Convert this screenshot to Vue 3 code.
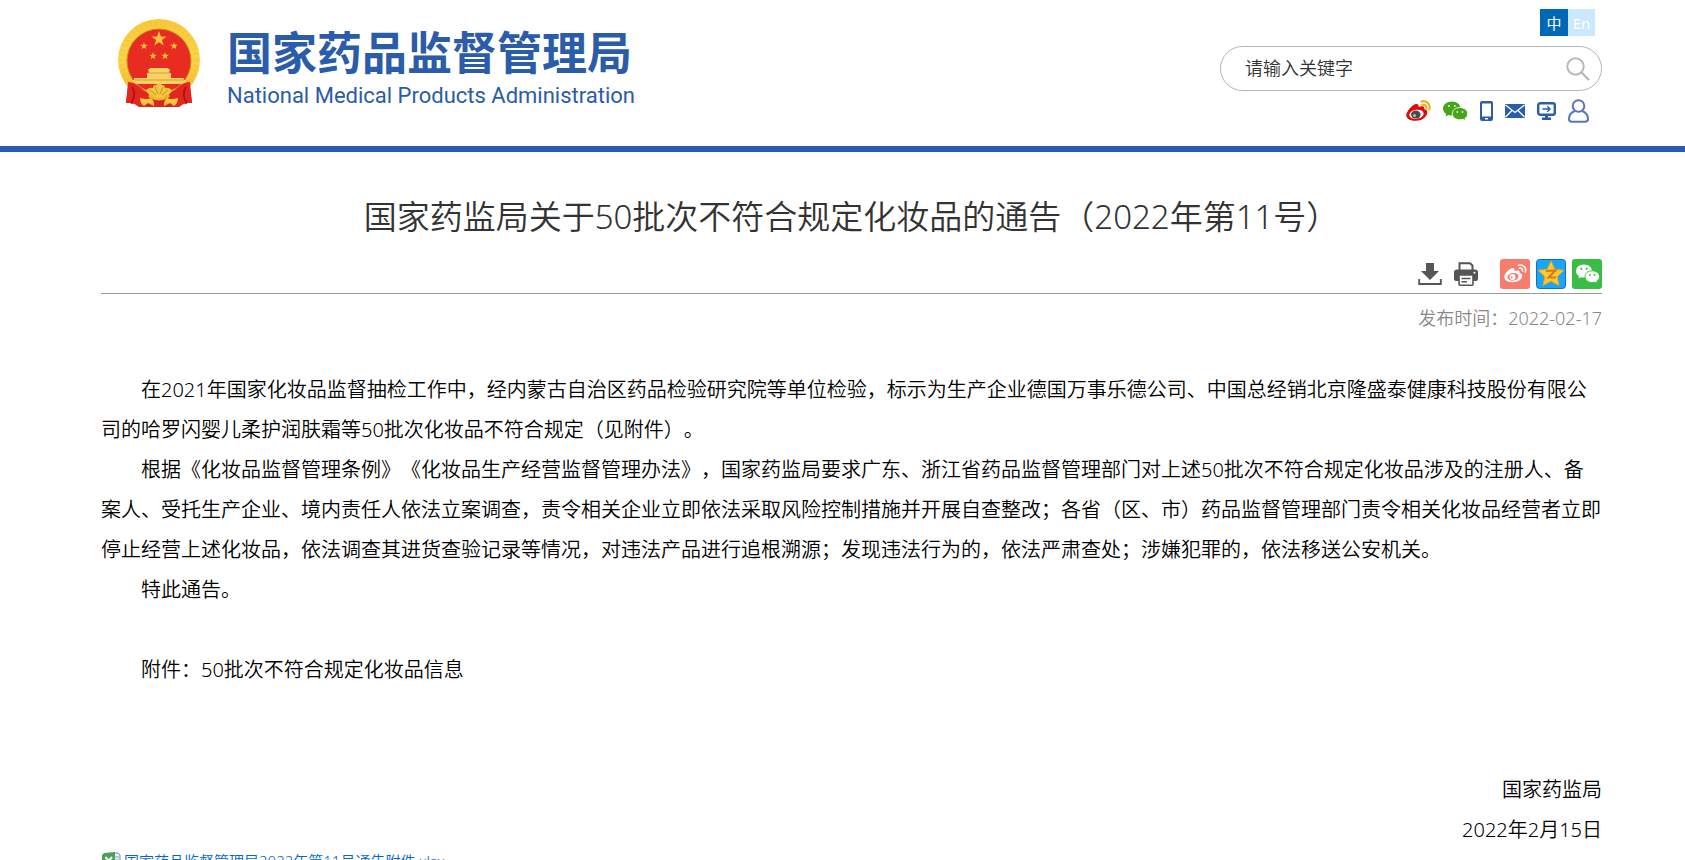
<script setup>
import { ref } from "vue";

const keyword = ref("");
const lang = ref("zh");

const paragraphs = [
  "在2021年国家化妆品监督抽检工作中，经内蒙古自治区药品检验研究院等单位检验，标示为生产企业德国万事乐德公司、中国总经销北京隆盛泰健康科技股份有限公司的哈罗闪婴儿柔护润肤霜等50批次化妆品不符合规定（见附件）。",
  "根据《化妆品监督管理条例》《化妆品生产经营监督管理办法》，国家药监局要求广东、浙江省药品监督管理部门对上述50批次不符合规定化妆品涉及的注册人、备案人、受托生产企业、境内责任人依法立案调查，责令相关企业立即依法采取风险控制措施并开展自查整改；各省（区、市）药品监督管理部门责令相关化妆品经营者立即停止经营上述化妆品，依法调查其进货查验记录等情况，对违法产品进行追根溯源；发现违法行为的，依法严肃查处；涉嫌犯罪的，依法移送公安机关。",
  "特此通告。",
];

// 五角星：国徽和 QQ 空间图标共用
function star(cx, cy, r, inner = 0.4) {
  const pts = [];
  for (let i = 0; i < 10; i++) {
    const a = (Math.PI / 5) * i - Math.PI / 2;
    const d = i % 2 ? r * inner : r;
    pts.push(`${(cx + d * Math.cos(a)).toFixed(1)},${(cy + d * Math.sin(a)).toFixed(1)}`);
  }
  return pts.join(" ");
}
</script>

<template>
  <div class="page" lang="zh-CN">
    <header class="header">
      <div class="wrap header-inner">
        <a class="brand" href="#">
          <svg class="emblem" viewBox="0 0 84 88" aria-hidden="true">
            <defs>
              <linearGradient id="gold" x1="0" y1="0" x2="0" y2="1">
                <stop offset="0" stop-color="#f8c93a" />
                <stop offset="0.5" stop-color="#fbd648" />
                <stop offset="1" stop-color="#eeb02a" />
              </linearGradient>
            </defs>
            <path d="M12 62 L9 84 Q12 83 15 85 Q19 83 25 88 L59 88 Q65 83 69 85 Q72 83 75 84 L72 62 Z" fill="#d9201c" />
            <circle cx="42" cy="41" r="41" fill="url(#gold)" />
            <circle cx="42" cy="41" r="37" fill="none" stroke="#e3a01c" stroke-width="5" stroke-dasharray="2 3" opacity="0.15" />
            <circle cx="42" cy="42" r="32" fill="#e82c22" stroke="#c98a1c" stroke-width="1" />
            <g fill="#f5c33c">
              <polygon :points="star(42, 20, 8)" />
              <polygon :points="star(27, 27, 4)" />
              <polygon :points="star(57, 27, 4)" />
              <polygon :points="star(36, 37, 4)" />
              <polygon :points="star(48, 37, 4)" />
            </g>
            <path d="M31 50 L33 50 L33 49 L51 49 L51 50 L53 50 L52 54 L54 54 L54 59 L67 59 L67 61 L69 61 L66 65 L18 65 L15 61 L17 61 L17 59 L30 59 L30 54 L32 54 Z" fill="#f7d266" />
            <path d="M31 54 H53 M17 61 H67" stroke="#dc9e2c" stroke-width="1" />
            <path d="M11 63 Q18 63 24 69 Q29 74 33 73 L30 81 L24 79 L28 88 L22 88 L16 84 L9 84 Z" fill="#e32720" />
            <path d="M73 63 Q66 63 60 69 Q55 74 51 73 L54 81 L60 79 L56 88 L62 88 L68 84 L75 84 Z" fill="#e32720" />
            <path d="M15 68 Q20 76 14 84 M69 68 Q64 76 70 84" stroke="#a81814" stroke-width="2" fill="none" />
            <path d="M30 77 Q42 86 54 77 L59 88 H25 Z" fill="#db241d" />
            <path d="M29 71 Q33 68 36 69 Q36 66 39 66 Q42 63 45 66 Q48 66 48 69 Q51 68 55 71 Q53 77 48 76 Q46 80 42 79 Q38 80 36 76 Q31 77 29 71 Z" fill="#f5c640" />
            <path d="M38 68 L41 75 M46 68 L43 75 M33 71 L39 76 M51 71 L45 76" stroke="#cf8d20" stroke-width="1" />
            <path d="M23 79 Q31 81 34 79 Q38 83 37 87 L31 84 L27 87 Q23 84 23 79 Z M61 79 Q53 81 50 79 Q46 83 47 87 L53 84 L57 87 Q61 84 61 79 Z" fill="#f5c640" />
          </svg>
          <span class="brand-text">
            <span class="brand-zh">国家药品监督管理局</span>
            <span class="brand-en">National Medical Products Administration</span>
          </span>
        </a>

        <div class="tools">
          <div class="langs">
            <button type="button" class="lang" :class="{ on: lang === 'zh' }" @click="lang = 'zh'">中</button>
            <button type="button" class="lang" :class="{ on: lang === 'en' }" @click="lang = 'en'">En</button>
          </div>
          <form class="search" @submit.prevent>
            <input v-model="keyword" type="text" placeholder="请输入关键字" aria-label="请输入关键字" />
            <button type="submit" aria-label="搜索">
              <svg width="24" height="24" viewBox="0 0 24 24" fill="none" stroke="#b9b9b9" stroke-width="2">
                <circle cx="9.5" cy="9.5" r="8.2" />
                <path d="M15.5 15.5 L23 23" stroke-width="2.4" />
              </svg>
            </button>
          </form>
          <nav class="links">
            <a href="#" aria-label="微博">
              <svg width="25" height="22" viewBox="0 0 25 22">
                <path d="M10 4 C12 3.5 13 5 12.5 7 C16 5.5 19 6 18 9 C22 10 22 13 20 16 C17 20.5 11 21.5 6 20.5 C1 19.5 -1 16 1 12.5 C3 8.5 7 4.5 10 4 Z" fill="#e20a0a" />
                <ellipse cx="10.5" cy="14.3" rx="7.2" ry="4.6" fill="#fff" transform="rotate(-8 10.5 14.3)" />
                <ellipse cx="9.8" cy="14.6" rx="4.8" ry="4" fill="#4a4a4a" />
                <circle cx="8.5" cy="15.5" r="1.5" fill="#bbb" />
                <path d="M15.5 1.5 C20 0 25 4 23.3 9.5 M16.3 4.8 C19 4.2 21 6 20.2 8.6" fill="none" stroke="#f0ae1c" stroke-width="2.2" stroke-linecap="round" />
              </svg>
            </a>
            <a href="#" aria-label="微信">
              <svg width="25" height="20" viewBox="0 0 25 20">
                <path d="M9 0.5 C4 0.5 0 3.5 0 7.5 C0 9.8 1.2 11.7 3.2 13 L2.5 15.5 L5.5 14 C6.7 14.4 7.9 14.5 9 14.5 C14 14.5 17.5 11.5 17.5 7.5 C17.5 3.5 14 0.5 9 0.5 Z" fill="#47a51b" />
                <path d="M16.8 6.5 C12.3 6.5 9.3 9.3 9.3 12.7 C9.3 16.3 12.5 18.8 17 18.8 C18 18.8 19 18.6 20 18.3 L22.6 19.7 L22 17.4 C23.8 16.2 24.7 14.6 24.7 12.7 C24.7 9.3 21.3 6.5 16.8 6.5 Z" fill="#47a51b" stroke="#fff" stroke-width="0.9" />
                <g fill="#e6f5df"><circle cx="6" cy="5" r="1" /><circle cx="11.8" cy="5" r="1" /><circle cx="14.3" cy="11" r="0.9" /><circle cx="19.5" cy="11" r="0.9" /></g>
              </svg>
            </a>
            <a href="#" aria-label="移动版">
              <svg width="13" height="20" viewBox="0 0 13 20">
                <path d="M2 0 H11 Q13 0 13 2 V18 Q13 20 11 20 H2 Q0 20 0 18 V2 Q0 0 2 0 Z M2 2.5 V15.5 H11 V2.5 Z M5 17 V18.5 H8 V17 Z" fill="#2b5dab" fill-rule="evenodd" />
              </svg>
            </a>
            <a href="#" aria-label="邮箱">
              <svg width="20" height="14" viewBox="0 0 20 14">
                <rect width="20" height="14" rx="1" fill="#2b5dab" />
                <path d="M0.5 1 L10 8.5 L19.5 1 M0.5 13 L7 6.5 M19.5 13 L13 6.5" fill="none" stroke="#fff" stroke-width="1.3" />
              </svg>
            </a>
            <a href="#" aria-label="电脑版">
              <svg width="19" height="18" viewBox="0 0 19 18">
                <rect x="1.2" y="1.2" width="16.6" height="11.6" rx="2" fill="none" stroke="#2b5dab" stroke-width="2.4" />
                <path d="M8 13 H11 V15.5 H14 V18 H5 V15.5 H8 Z" fill="#2b5dab" />
                <path d="M5.5 7 H13 M10.3 4.3 L13 7 L10.3 9.7" fill="none" stroke="#2b5dab" stroke-width="1.4" />
              </svg>
            </a>
            <a href="#" aria-label="个人中心">
              <svg width="21" height="24" viewBox="0 0 21 24" fill="none" stroke="#5b74b8" stroke-width="2">
                <circle cx="10.5" cy="7" r="5.8" />
                <path d="M6.8 12 C3 13.5 1 16.5 1 20 Q1 22.8 4 22.8 H17 Q20 22.8 20 20 C20 16.5 18 13.5 14.2 12" />
              </svg>
            </a>
          </nav>
        </div>
      </div>
    </header>

    <main class="wrap article">
      <h1>国家药监局关于50批次不符合规定化妆品的通告（2022年第11号）</h1>

      <div class="share">
        <button type="button" aria-label="下载">
          <svg width="24" height="24" viewBox="0 0 24 24" fill="#555">
            <path d="M8 1 H16 V9 H21 L12 18 L3 9 H8 Z" />
            <path d="M1.2 17 V22 H22.8 V17" fill="none" stroke="#555" stroke-width="1.8" />
          </svg>
        </button>
        <button type="button" aria-label="打印" class="print">
          <svg width="24" height="24" viewBox="0 0 24 24">
            <path d="M5.5 8 V1.2 H16 L18.5 3.5 V8" fill="#fff" stroke="#555" stroke-width="2" />
            <path d="M3 7.5 H21 Q24 7.5 24 10.5 V17 Q24 19 22 19 H2 Q0 19 0 17 V10.5 Q0 7.5 3 7.5 Z" fill="#555" />
            <rect x="5" y="13" width="14" height="10.2" rx="1" fill="#fff" stroke="#555" stroke-width="1.6" />
            <path d="M7.5 16.5 H16.5 M7.5 19.7 H13" stroke="#555" stroke-width="1.5" />
            <circle cx="20.5" cy="10.7" r="1" fill="#fff" />
          </svg>
        </button>
        <a href="#" aria-label="分享到微博">
          <svg width="30" height="30" viewBox="0 0 30 30">
            <rect width="30" height="30" rx="3" fill="#f67c6d" />
            <path d="M12 9 C14 8.5 15 10 14.3 12 C18 10.8 20.5 11.5 19.6 14 C23 15 23 18 21 20 C17.5 23.5 11.5 24 8 22.5 C3.5 20.8 3.5 17 6 13.8 C7.8 11.5 10 9.5 12 9 Z" fill="#fff" />
            <ellipse cx="13" cy="17.8" rx="5.6" ry="3.8" fill="#f67c6d" transform="rotate(-8 13 17.8)" />
            <circle cx="12.5" cy="18" r="3" fill="#fff" />
            <circle cx="11.8" cy="18.5" r="1" fill="#f67c6d" />
            <path d="M18.5 6.3 C23 5 27 8.5 25.3 13 M19.3 9.2 C21.5 8.8 23 10.2 22.5 12" fill="none" stroke="#fff" stroke-width="1.6" stroke-linecap="round" />
          </svg>
        </a>
        <a href="#" aria-label="分享到QQ空间">
          <svg width="30" height="30" viewBox="0 0 30 30">
            <rect x="0.5" y="0.5" width="29" height="29" rx="3" fill="#1aa5f5" stroke="#0d6fc0" />
            <polygon :points="star(15, 15.5, 13.5, 0.48)" fill="#fecb2f" stroke="#f5a31a" stroke-width="1" stroke-linejoin="round" />
            <path d="M10 12 L19.5 11.5 L12.5 18.5 H20" fill="none" stroke="#d9761a" stroke-width="2" />
          </svg>
        </a>
        <a href="#" aria-label="分享到微信">
          <svg width="30" height="30" viewBox="0 0 30 30">
            <rect width="30" height="30" rx="3" fill="#39bd45" />
            <path d="M12 5.5 C7.5 5.5 4 8.3 4 12 C4 14.2 5.2 16 7 17.2 L6.3 19.5 L9 18.2 C10 18.5 11 18.6 12 18.6 C16.5 18.6 20 15.7 20 12 C20 8.3 16.5 5.5 12 5.5 Z" fill="#fff" />
            <path d="M20.2 11.8 C16 11.8 13 14.4 13 17.7 C13 21 16 23.6 20.2 23.6 L22.8 23.2 L25.3 24.6 L24.7 22.4 C26.5 21.3 27.5 19.6 27.5 17.7 C27.5 14.4 24.4 11.8 20.2 11.8 Z" fill="#fff" stroke="#39bd45" stroke-width="1" />
            <g fill="#39bd45"><circle cx="9.3" cy="9.8" r="1.1" /><circle cx="14.6" cy="9.8" r="1.1" /><circle cx="17.8" cy="16" r="1" /><circle cx="22.5" cy="16" r="1" /></g>
          </svg>
        </a>
      </div>

      <p class="date">发布时间：2022-02-17</p>

      <div class="content">
        <p v-for="(p, i) in paragraphs" :key="i">{{ p }}</p>
        <p class="attach-title">附件：50批次不符合规定化妆品信息</p>
        <div class="sign">
          <p>国家药监局</p>
          <p>2022年2月15日</p>
        </div>
      </div>

      <a class="file" href="#">
        <svg width="20" height="18" viewBox="0 0 20 18" aria-hidden="true">
          <path d="M12 1 H17 L19 3 V17 H12 Z" fill="#eef3fa" stroke="#6c8cb5" />
          <path d="M13 5 H18 M13 8 H18 M13 11 H18" stroke="#8aa6c8" />
          <path d="M3 1 L14 0 V17 L1 16 V3 Z" fill="#4aa356" />
          <path d="M4.5 5 L11 13 M11 5 L4.5 13" stroke="#fff" stroke-width="2" />
        </svg>
        <span>国家药品监督管理局2022年第11号通告附件.xlsx</span>
      </a>
    </main>
  </div>
</template>

<style>
body {
  margin: 0;
  background: #fff;
}
</style>

<style scoped>
.page {
  font-family: "Noto Sans", "Noto Sans CJK SC", sans-serif;
  font-weight: 350;
  color: #000;
  text-spacing-trim: space-all;
}
.wrap { padding: 0 83px 0 101px; }

button {
  padding: 0;
  border: 0;
  background: none;
  font-family: inherit;
  cursor: pointer;
}
svg { display: block; }
p { margin: 0; }

/* 顶部 */
.header { border-bottom: 6px solid #2a5caa; }
.header-inner {
  display: flex; justify-content: space-between; align-items: flex-start;
  height: 146px;
}
.brand {
  display: flex; gap: 26px;
  padding: 19px 0 0 16px;
  color: #2a5caa;
  text-decoration: none;
}
.emblem { width: 84px; height: 88px; }
.brand-text { display: flex; flex-direction: column; padding-top: 7px; }
.brand-zh { font-size: 45px; font-weight: 700; line-height: 54px; }
.brand-en {
  font-family: Roboto, "Liberation Sans", sans-serif;
  font-size: 22px; font-weight: 400; line-height: 32px;
}

.tools {
  display: flex; flex-direction: column; align-items: flex-end;
  width: 382px;
  padding-top: 9px;
}
.langs { display: flex; margin-right: 7px; }
.lang {
  width: 27px; height: 27px;
  background: #cce8ff;
  color: #fff;
  font-size: 15px;
}
.lang.on { width: 28px; background: #0068b7; }

.search {
  display: flex; align-items: center;
  box-sizing: border-box;
  width: 100%; height: 45px;
  margin-top: 10px; padding: 0 11px 0 24px;
  border: 1px solid #b5b5b5;
  border-radius: 23px;
}
.search input {
  flex: 1; min-width: 0;
  padding: 0 0 2px;
  border: 0; outline: 0;
  background: none;
  font-family: inherit; font-size: 18px; font-weight: inherit;
  color: #333;
}
.search input::placeholder { color: #333; opacity: 1; }

.links {
  display: flex; align-items: center; gap: 12px;
  height: 24px;
  margin: 8px 13px 0 0;
}

/* 正文 */
h1 {
  margin: 0; padding-top: 40px;
  font-size: 33px; font-weight: 350; line-height: 50px;
  text-align: center;
  color: #333;
}
.share {
  display: flex; justify-content: flex-end; align-items: center; gap: 6px;
  margin-top: 17px; padding-bottom: 4px;
  border-bottom: 1px solid #999;
}
.print { margin: 0 16px 0 6px; }
.date {
  padding-top: 10px;
  font-size: 18px; line-height: 28px;
  text-align: right;
  color: #888;
}
.content {
  padding-top: 38px;
  font-size: 20px; line-height: 40px;
}
.content > p { text-indent: 2em; }
.content .attach-title { margin-top: 40px; }
.sign { margin-top: 80px; text-align: right; }

.file {
  display: flex; align-items: center; gap: 3px;
  font-size: 15px; line-height: 22px;
  color: #0066cc;
  text-decoration: none;
}
</style>
